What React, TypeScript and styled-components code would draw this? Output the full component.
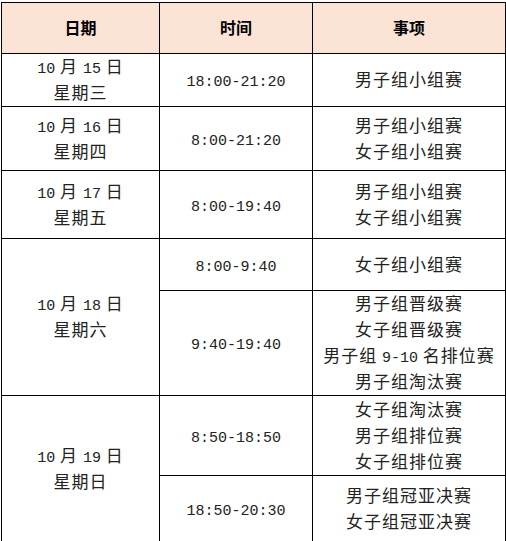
import React from 'react';
import styled, { createGlobalStyle } from 'styled-components';

const GlobalStyle = createGlobalStyle`
  html, body {
    margin: 0;
    padding: 0;
    background: #ffffff;
    overflow: hidden;
  }
  body {
    font-family: "Noto Sans CJK SC", "Noto Sans", sans-serif;
  }
`;

const Grid = styled.div`
  display: grid;
  width: max-content;
  grid-template-columns: 158px 153px 193px;
  grid-template-rows: 51px 53px 64px 68px 52px 105px 80px 66px;
  margin: 2px 0 0 1px;
  border-top: 1px solid #000;
  border-left: 1px solid #000;
`;

const Cell = styled.div<{ $span?: number }>`
  grid-row: span ${(p) => p.$span ?? 1};
  display: flex;
  flex-direction: column;
  align-items: center;
  justify-content: center;
  border-right: 1px solid #000;
  border-bottom: 1px solid #000;
  background: #ffffff;
`;

const HeadCell = styled(Cell)`
  background: #fbe4d5;
  font-size: 16px;
  font-weight: 700;
  color: #000;
  line-height: 26px;
  padding-bottom: 2px;
`;

const Line = styled.div`
  height: 26px;
  font-size: 17px;
  letter-spacing: 1px;
  line-height: 24px;
  color: #222;
  white-space: nowrap;
`;

const Num = styled.span`
  font-family: "Liberation Mono", monospace;
  font-size: 15px;
  line-height: 1;
  letter-spacing: 0;
`;

interface Slot {
  time: string;
  events: string[];
}

interface Day {
  date: string;
  week: string;
  slots: Slot[];
}

const days: Day[] = [
  { date: '10 月 15 日', week: '星期三', slots: [{ time: '18:00-21:20', events: ['男子组小组赛'] }] },
  { date: '10 月 16 日', week: '星期四', slots: [{ time: '8:00-21:20', events: ['男子组小组赛', '女子组小组赛'] }] },
  { date: '10 月 17 日', week: '星期五', slots: [{ time: '8:00-19:40', events: ['男子组小组赛', '女子组小组赛'] }] },
  {
    date: '10 月 18 日',
    week: '星期六',
    slots: [
      { time: '8:00-9:40', events: ['女子组小组赛'] },
      { time: '9:40-19:40', events: ['男子组晋级赛', '女子组晋级赛', '男子组 9-10 名排位赛', '男子组淘汰赛'] },
    ],
  },
  {
    date: '10 月 19 日',
    week: '星期日',
    slots: [
      { time: '8:50-18:50', events: ['女子组淘汰赛', '男子组排位赛', '女子组排位赛'] },
      { time: '18:50-20:30', events: ['男子组冠亚决赛', '女子组冠亚决赛'] },
    ],
  },
];

// digits get the half-width font, the rest stays CJK
const Text: React.FC<{ value: string }> = ({ value }) => (
  <Line>
    {value.split(/([0-9:\-]+)/).map((part, i) =>
      /^[0-9:\-]+$/.test(part) ? <Num key={i}>{part}</Num> : part
    )}
  </Line>
);

export default function App() {
  return (
    <>
      <GlobalStyle />
      <Grid>
        <HeadCell>日期</HeadCell>
        <HeadCell>时间</HeadCell>
        <HeadCell>事项</HeadCell>
        {days.map((day) => (
          <React.Fragment key={day.date}>
            <Cell $span={day.slots.length}>
              <Text value={day.date} />
              <Text value={day.week} />
            </Cell>
            {day.slots.map((slot) => (
              <React.Fragment key={slot.time}>
                <Cell>
                  <Text value={slot.time} />
                </Cell>
                <Cell>
                  {slot.events.map((ev) => (
                    <Text key={ev} value={ev} />
                  ))}
                </Cell>
              </React.Fragment>
            ))}
          </React.Fragment>
        ))}
      </Grid>
    </>
  );
}
